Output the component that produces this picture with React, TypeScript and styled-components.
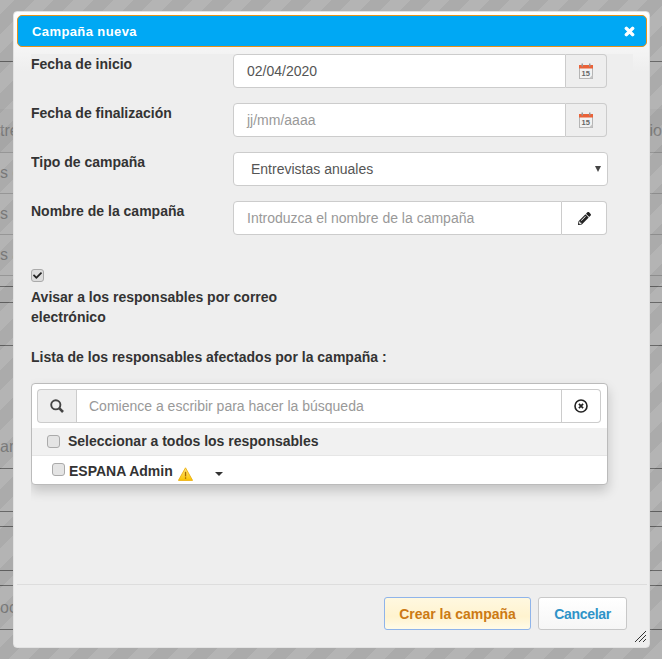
import React from 'react';
import styled, { createGlobalStyle } from 'styled-components';
import { FaCheck, FaPencilAlt, FaTimes } from 'react-icons/fa';

const GlobalStyle = createGlobalStyle`
  html, body {
    margin: 0;
    height: 100%;
    overflow: hidden;
  }
  body {
    font-family: "Liberation Sans", Arial, sans-serif;
    font-size: 14px;
    color: #333;
  }
`;

const Page = styled.div`
  position: relative;
  width: 662px;
  height: 659px;
  overflow: hidden;
  background: #fff;
`;

const BackRows = styled.div`
  display: flex;
  flex-direction: column;
  padding-top: 61px;
`;

const lineColors = { dark: '#000', light: '#999', none: 'transparent' };

const BackRow = styled.div<{ $h: number; $line: keyof typeof lineColors; $shade?: boolean }>`
  height: ${(p) => p.$h}px;
  flex: none;
  box-sizing: border-box;
  border-top: 1px solid ${(p) => lineColors[p.$line]};
  background: ${(p) => (p.$shade ? '#eee' : '#fff')};
  display: flex;
  justify-content: space-between;
  align-items: center;
  font-size: 16px;
  color: #555;
  white-space: nowrap;
`;

const Overlay = styled.div`
  position: absolute;
  inset: 0;
  background-color: #888;
  background-image: repeating-linear-gradient(
    -45deg,
    rgba(255, 255, 255, 0.11) 0 14px,
    transparent 14px 28px
  );
  opacity: 0.7;
`;

const Dialog = styled.div`
  position: absolute;
  left: 13px;
  top: 11px;
  width: 637px;
  height: 637px;
  box-sizing: border-box;
  padding: 3px 2px 3px 3px;
  background: linear-gradient(#fff, #eee 60px);
  border: 1px solid #e2e2e2;
  border-radius: 4px;
  display: flex;
  flex-direction: column;
`;

const TitleBar = styled.div`
  height: 32px;
  flex: none;
  box-sizing: border-box;
  background: #00a8f4;
  border: 1px solid #e5921a;
  border-radius: 5px;
  display: flex;
  align-items: center;
  justify-content: space-between;
  padding: 0 10px 0 14px;
  color: #fff;
  font-weight: bold;
  font-size: 13px;
  letter-spacing: 0.4px;

  svg {
    stroke: currentColor;
    stroke-width: 40;
  }
`;

const Body = styled.div`
  flex: 1;
  margin: 7px 14px 0 14px;
  overflow: hidden;
  background: #eee;
`;

const FieldRow = styled.div`
  display: grid;
  grid-template-columns: 202px 1fr;
  height: 34px;
  margin-bottom: 15px;
`;

const Label = styled.label`
  font-weight: bold;
  font-size: 14px;
  line-height: 20px;
  color: #333;
`;

const InputGroup = styled.div`
  display: flex;
  height: 34px;
  width: 374px;
`;

const TextBox = styled.div<{ $muted?: boolean }>`
  flex: 1;
  box-sizing: border-box;
  background: #fff;
  border: 1px solid #ccc;
  border-radius: 4px 0 0 4px;
  padding: 0 12px 0 13px;
  line-height: 32px;
  font-size: 14px;
  color: ${(p) => (p.$muted ? '#999' : '#555')};
`;

const Addon = styled.div<{ $white?: boolean; $w: number }>`
  width: ${(p) => p.$w}px;
  flex: none;
  box-sizing: border-box;
  background: ${(p) => (p.$white ? '#fff' : '#eee')};
  border: 1px solid #ccc;
  border-left: 0;
  border-radius: 0 4px 4px 0;
  display: flex;
  align-items: center;
  justify-content: center;
  color: #222;
  font-size: 14px;
`;

const SelectBox = styled.div`
  width: 375px;
  height: 34px;
  box-sizing: border-box;
  background: #fff;
  border: 1px solid #ccc;
  border-radius: 4px;
  padding: 0 6px 0 17px;
  display: flex;
  align-items: center;
  justify-content: space-between;
  font-size: 14px;
  color: #555;
`;

const SelectArrow = styled.span`
  width: 0;
  height: 0;
  border-left: 3.5px solid transparent;
  border-right: 3.5px solid transparent;
  border-top: 6px solid #444;
`;

const Check = styled.span<{ $checked?: boolean }>`
  display: inline-flex;
  align-items: center;
  justify-content: center;
  width: 13px;
  height: 13px;
  flex: none;
  box-sizing: border-box;
  background: ${(p) => (p.$checked ? '#ddd' : '#e4e4e4')};
  border: 1px solid #aaa;
  border-radius: 3px;
  color: #222;
  font-size: 9px;
`;

const NotifyBlock = styled.div`
  margin-top: 34px;
  display: flex;
  flex-direction: column;
`;

const NotifyLabel = styled(Label)`
  width: 260px;
  display: block;
  margin-top: 5px;
`;

const ListTitle = styled(Label)`
  display: block;
  margin-top: 20px;
`;

const ListPanel = styled.div`
  margin-top: 16px;
  margin-bottom: 20px;
  width: 577px;
  box-sizing: border-box;
  background: #fff;
  border: 1px solid #bbb;
  border-radius: 4px;
  box-shadow: 0 6px 12px rgba(0, 0, 0, 0.18);
`;

const SearchRow = styled.div`
  display: flex;
  height: 34px;
  padding: 5px 6px 5px 5px;
`;

const SearchAddon = styled(Addon)`
  border: 1px solid #ccc;
  border-right: 0;
  border-radius: 4px 0 0 4px;
  color: #444;
`;

const SearchBox = styled(TextBox)`
  border-radius: 0;
  padding-left: 12px;
`;

const SelectAllRow = styled.div`
  height: 28px;
  box-sizing: border-box;
  background: #f1f1f1;
  border-bottom: 1px solid #e6e6e6;
  display: flex;
  align-items: center;
  gap: 8px;
  padding: 0 0 2px 15px;
  font-weight: bold;
`;

const SelectAllCheck = styled(Check)`
  margin-top: 1px;
`;

const PersonRow = styled.div`
  height: 28px;
  box-sizing: border-box;
  display: flex;
  align-items: center;
  padding: 2px 0 0 20px;
  font-weight: bold;
`;

const PersonCheck = styled(Check)`
  margin-top: -4px;
`;

const PersonName = styled.span`
  margin-left: 4px;
`;

const WarningIcon = styled.svg`
  margin: 5px 0 0 5px;
`;

const Caret = styled.span`
  width: 0;
  height: 0;
  margin-left: 22px;
  margin-top: 6px;
  border-left: 4px solid transparent;
  border-right: 4px solid transparent;
  border-top: 4px solid #333;
`;

const Footer = styled.div`
  height: 59px;
  flex: none;
  box-sizing: content-box;
  border-top: 1px solid #ddd;
  display: flex;
  justify-content: flex-end;
  align-items: flex-start;
  gap: 7px;
  padding-right: 20px;
  position: relative;
`;

const Button = styled.button<{ $primary?: boolean }>`
  width: ${(p) => (p.$primary ? 147 : 89)}px;
  height: 33px;
  margin-top: 12px;
  box-sizing: border-box;
  padding: 0;
  font-family: inherit;
  font-size: 14px;
  font-weight: bold;
  letter-spacing: ${(p) => (p.$primary ? 0 : -0.3)}px;
  border-radius: 3px;
  border: 1px solid ${(p) => (p.$primary ? '#8fb4ea' : '#c8c8c8')};
  color: ${(p) => (p.$primary ? '#cc7a14' : '#2e93c8')};
  background: ${(p) =>
    p.$primary
      ? 'linear-gradient(#fff8e0, #fff3cf 60%, #fffbe9)'
      : 'linear-gradient(#fff, #f6f6f6)'};
`;

const Grip = styled.svg`
  position: absolute;
  right: 0;
  bottom: 1px;
`;

const Warning = () => (
  <WarningIcon width="15" height="14" viewBox="0 0 15 14">
    <defs>
      <linearGradient id="warn" x1="0" y1="0" x2="0" y2="1">
        <stop offset="0" stopColor="#ffe680" />
        <stop offset="1" stopColor="#fbc400" />
      </linearGradient>
    </defs>
    <path d="M7.5 .8 14.6 13.4H.4z" fill="url(#warn)" stroke="#e8a800" strokeWidth="0.8" />
    <rect x="6.9" y="4.8" width="1.3" height="4.6" fill="#a86a00" />
    <rect x="6.9" y="10.3" width="1.3" height="1.5" fill="#a86a00" />
  </WarningIcon>
);

const CalendarIcon = () => (
  <svg width="14" height="16" viewBox="0 0 14 16">
    <rect x="0.5" y="2.5" width="13" height="13" fill="#f2f2f2" stroke="#b5b5b5" />
    <rect x="0" y="2" width="14" height="3.5" fill="#ea6238" />
    <rect x="2.5" y="0.5" width="1.5" height="3" fill="#999" />
    <rect x="10" y="0.5" width="1.5" height="3" fill="#999" />
    <path d="M10 15.5 13.5 12v3.5z" fill="#c4c4c4" />
    <text x="2.6" y="12.8" fontSize="7.5" fontWeight="bold" fontFamily="Liberation Sans" fill="#666">15</text>
  </svg>
);

const SearchIcon = () => (
  <svg width="14" height="14" viewBox="0 0 14 14" fill="none" stroke="currentColor">
    <circle cx="5.8" cy="5.8" r="4.6" strokeWidth="1.9" />
    <path d="M9.2 9.2 13 13" strokeWidth="2.6" />
  </svg>
);

const ClearIcon = () => (
  <svg width="14" height="14" viewBox="0 0 14 14" fill="none" stroke="#222">
    <circle cx="7" cy="7" r="6" strokeWidth="1.6" />
    <path d="M4.9 4.9 9.1 9.1M9.1 4.9 4.9 9.1" strokeWidth="1.7" />
  </svg>
);

const rows: Array<[number, keyof typeof lineColors, boolean, string, string]> = [
  [48, 'dark', false, '', ''],
  [43, 'none', true, 'tre', 'io'],
  [41, 'light', false, 's c', ''],
  [41, 'light', false, 's', ''],
  [41, 'light', false, 's a', ''],
  [11, 'light', false, '', ''],
  [16, 'dark', false, '', ''],
  [43, 'dark', false, '', ''],
  [80, 'dark', false, '', ''],
  [43, 'none', false, 'am', ''],
  [43, 'dark', false, '', ''],
  [15, 'dark', false, '', ''],
  [44, 'dark', false, '', ''],
  [15, 'dark', false, '', ''],
  [44, 'dark', false, 'oc', ''],
  [30, 'dark', false, '', ''],
];

export default function App() {
  return (
    <Page>
      <GlobalStyle />
      <BackRows>
        {rows.map(([h, line, shade, left, right], i) => (
          <BackRow key={i} $h={h} $line={line} $shade={shade}>
            <span>{left}</span>
            <span>{right}</span>
          </BackRow>
        ))}
      </BackRows>
      <Overlay />
      <Dialog>
        <TitleBar>
          Campaña nueva
          <FaTimes size={13} />
        </TitleBar>
        <Body>
          <FieldRow>
            <Label>Fecha de inicio</Label>
            <InputGroup>
              <TextBox>02/04/2020</TextBox>
              <Addon $w={41}><CalendarIcon /></Addon>
            </InputGroup>
          </FieldRow>
          <FieldRow>
            <Label>Fecha de finalización</Label>
            <InputGroup>
              <TextBox $muted>jj/mm/aaaa</TextBox>
              <Addon $w={41}><CalendarIcon /></Addon>
            </InputGroup>
          </FieldRow>
          <FieldRow>
            <Label>Tipo de campaña</Label>
            <SelectBox>
              Entrevistas anuales
              <SelectArrow />
            </SelectBox>
          </FieldRow>
          <FieldRow>
            <Label>Nombre de la campaña</Label>
            <InputGroup>
              <TextBox $muted>Introduzca el nombre de la campaña</TextBox>
              <Addon $w={45} $white><FaPencilAlt size={13} /></Addon>
            </InputGroup>
          </FieldRow>
          <NotifyBlock>
            <Check $checked><FaCheck /></Check>
            <NotifyLabel>Avisar a los responsables por correo electrónico</NotifyLabel>
          </NotifyBlock>
          <ListTitle>Lista de los responsables afectados por la campaña :</ListTitle>
          <ListPanel>
            <SearchRow>
              <SearchAddon $w={39}><SearchIcon /></SearchAddon>
              <SearchBox $muted>Comience a escribir para hacer la búsqueda</SearchBox>
              <Addon $w={39} $white><ClearIcon /></Addon>
            </SearchRow>
            <SelectAllRow>
              <SelectAllCheck />
              Seleccionar a todos los responsables
            </SelectAllRow>
            <PersonRow>
              <PersonCheck />
              <PersonName>ESPANA Admin</PersonName>
              <Warning />
              <Caret />
            </PersonRow>
          </ListPanel>
        </Body>
        <Footer>
          <Button $primary>Crear la campaña</Button>
          <Button>Cancelar</Button>
          <Grip width="14" height="14" viewBox="0 0 14 14">
            <path d="M13 2 2 13M13 6 6 13M13 10 10 13" stroke="#333" strokeWidth="1" fill="none" />
          </Grip>
        </Footer>
      </Dialog>
    </Page>
  );
}
